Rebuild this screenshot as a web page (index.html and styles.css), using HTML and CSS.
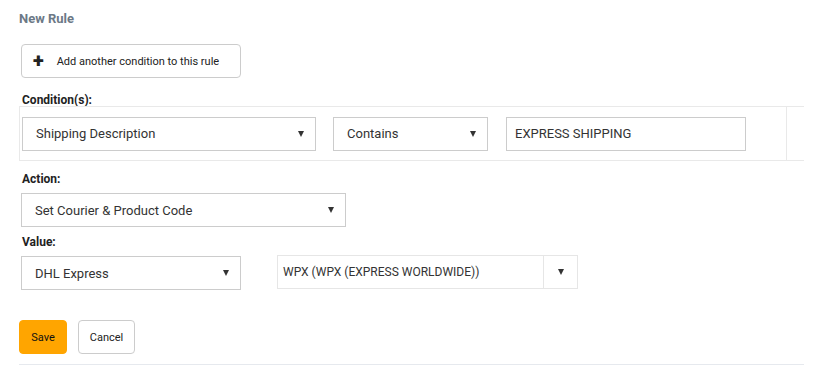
FILE: index.html
```html
<!DOCTYPE html>
<html lang="en">
<head>
  <meta charset="UTF-8" />
  <title>New Rule</title>
  <link rel="stylesheet" href="styles.css">
</head>
<body>
  <div class="rule-form">
    <h3 class="rule-title">New Rule</h3>

    <button class="btn add-btn">
      <span class="plus">+</span>
      Add another condition to this rule
    </button>

    <label class="field-label cond-label">Condition(s):</label>
    <div class="cond-table">
      <div class="cond-cell">
        <div class="select sel-field">
          <span>Shipping Description</span><span class="caret"></span>
        </div>
        <div class="select sel-op">
          <span>Contains</span><span class="caret"></span>
        </div>
        <div class="text-input">EXPRESS SHIPPING</div>
      </div>
      <div class="cond-extra"></div>
    </div>

    <label class="field-label action-label">Action:</label>
    <div class="select sel-action">
      <span>Set Courier &amp; Product Code</span><span class="caret"></span>
    </div>

    <label class="field-label value-label">Value:</label>
    <div class="value-row">
      <div class="select sel-courier">
        <span>DHL Express</span><span class="caret"></span>
      </div>
      <div class="combo">
        <span class="combo-text">WPX (WPX (EXPRESS WORLDWIDE))</span>
        <span class="combo-btn"><span class="caret"></span></span>
      </div>
    </div>

    <div class="actions">
      <button class="btn btn-save">Save</button>
      <button class="btn btn-cancel">Cancel</button>
    </div>
  </div>
</body>
</html>
```

FILE: styles.css
```css
body {
  margin: 0;
  padding: 0;
  background: #fff;
  font-family: Roboto, "Noto Sans", sans-serif;
  color: #333;
}

.rule-form {
  width: 785px;
  padding: 11px 0 0 19px;
  display: flex;
  flex-direction: column;
  align-items: flex-start;
}

.rule-title {
  margin: 0;
  font-size: 13px;
  font-weight: 700;
  color: #6c7986;
  line-height: 16px;
}

.btn {
  font-family: inherit;
  background: #fff;
  border: 1px solid #ccc;
  border-radius: 4px;
  height: 34px;
  font-size: 11px;
  color: #222;
  cursor: pointer;
  padding: 0;
}

.add-btn {
  margin: 17px 0 0 2px;
  width: 220px;
  display: flex;
  align-items: center;
  padding-left: 11px;
}

.plus {
  font-size: 20px;
  font-weight: 900;
  line-height: 1;
  margin-right: 13px;
  margin-top: -3px;
}

.field-label {
  font-size: 12px;
  font-weight: 700;
  color: #222;
  line-height: 14px;
  margin-left: 3px;
}

.cond-label {
  margin-top: 15px;
}

.cond-table {
  width: 785px;
  height: 55px;
  border-top: 1px solid #e9e9e9;
  border-bottom: 1px solid #e9e9e9;
  display: flex;
  box-sizing: border-box;
  margin-top: -1px;
}

.cond-cell {
  width: 768px;
  border-left: 1px solid #e9e9e9;
  border-right: 1px solid #e9e9e9;
  display: flex;
  align-items: center;
  padding-left: 2px;
  box-sizing: border-box;
}

.select {
  height: 34px;
  box-sizing: border-box;
  border: 1px solid #ccc;
  display: flex;
  align-items: center;
  justify-content: space-between;
  padding: 0 11px 0 13px;
  font-size: 13px;
  color: #333;
  background: #fff;
}

.caret {
  width: 0;
  height: 0;
  border-left: 3.5px solid transparent;
  border-right: 3.5px solid transparent;
  border-top: 6px solid #333;
}

.sel-field {
  width: 294px;
}

.sel-op {
  width: 155px;
  margin-left: 17px;
}

.text-input {
  width: 240px;
  height: 34px;
  box-sizing: border-box;
  border: 1px solid #ccc;
  font-size: 13px;
  display: flex;
  align-items: center;
  padding-left: 8px;
  margin-left: 18px;
}

.action-label {
  margin-top: 11px;
}

.sel-action {
  width: 325px;
  margin: 7px 0 0 2px;
}

.value-label {
  margin-top: 8px;
}

.value-row {
  display: flex;
  align-items: flex-start;
  margin: 7px 0 0 2px;
  gap: 36px;
}

.sel-courier {
  width: 220px;
}

.combo {
  width: 301px;
  height: 34px;
  box-sizing: border-box;
  border: 1px solid #e6e6e6;
  display: flex;
  margin-top: -1px;
  font-size: 12px;
}

.combo-text {
  flex: 1;
  display: flex;
  align-items: center;
  padding-left: 5px;
  border-right: 1px solid #e6e6e6;
}

.combo-btn {
  width: 33px;
  display: flex;
  align-items: center;
  justify-content: center;
}

.actions {
  display: flex;
  gap: 11px;
  margin-top: 30px;
  padding-bottom: 10px;
  width: 785px;
  border-bottom: 1px solid #e6e9ee;
}

.btn-save {
  width: 48px;
  background: #ffa500;
  border-color: #ffa500;
  color: #111;
}

.btn-cancel {
  width: 57px;
}
```
